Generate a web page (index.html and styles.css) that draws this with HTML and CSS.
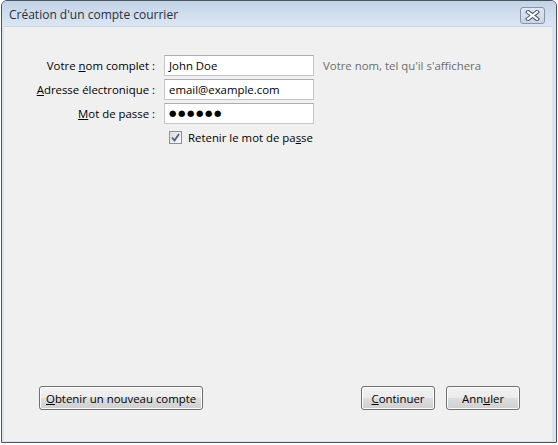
FILE: index.html
```html
<!DOCTYPE html>
<html lang="fr">
<head>
<meta charset="utf-8">
<title>Création d'un compte courrier</title>
<link rel="stylesheet" href="styles.css">
</head>
<body>
<div class="window">
  <div class="titlebar">
    <span class="title">Création d'un compte courrier</span>
    <button class="close" aria-label="Fermer">
      <svg width="15" height="11" viewBox="0 0 15 11">
        <path d="M3 2 L12 9 M12 2 L3 9" stroke="#4e5666" stroke-width="4.2" stroke-linecap="square" fill="none"/>
        <path d="M3 2 L12 9 M12 2 L3 9" stroke="#ffffff" stroke-width="2.2" stroke-linecap="square" fill="none"/>
      </svg>
    </button>
  </div>
  <div class="client">
    <div class="form">
      <label class="lbl">Votre <u>n</u>om complet :</label>
      <div class="field">John Doe</div>
      <span class="hint">Votre nom, tel qu'il s'affichera</span>

      <label class="lbl"><u>A</u>dresse électronique :</label>
      <div class="field">email@example.com</div>
      <span></span>

      <label class="lbl"><u>M</u>ot de passe :</label>
      <div class="field pw">●●●●●●</div>
      <span></span>

      <span></span>
      <div class="check">
        <span class="box">
          <svg width="9" height="9" viewBox="0 0 9 9"><path d="M1 4.5 L3.5 7.5 L8 1" stroke="#4a5f8c" stroke-width="1.8" fill="none"/></svg>
        </span>
        <span>Retenir le mot de pa<u>s</u>se</span>
      </div>
      <span></span>
    </div>
    <div class="buttons">
      <button class="btn wide"><u>O</u>btenir un nouveau compte</button>
      <div class="right">
        <button class="btn"><u>C</u>ontinuer</button>
        <button class="btn">Ann<u>u</u>ler</button>
      </div>
    </div>
  </div>
</div>
</body>
</html>
```
FILE: styles.css
```css
html, body {
  margin: 0;
  padding: 0;
  background: #ffffff;
}
body {
  width: 558px;
  height: 445px;
  overflow: hidden;
  font-family: "Open Sans", "Noto Sans", sans-serif;
  font-size: 11.4px;
  color: #000;
}
.window {
  margin-left: 1px;
  width: 556px;
  height: 443px;
  box-sizing: border-box;
  border: 1px solid #4d5158;
  border-radius: 6px 6px 0 0;
  background: #d9e4f1;
  display: flex;
  flex-direction: column;
}
.titlebar {
  height: 25px;
  flex: none;
  display: flex;
  align-items: center;
  justify-content: space-between;
  padding: 0 11px 0 7px;
  background: linear-gradient(#c2d3e7, #dbe6f3);
  border-radius: 5px 5px 0 0;
}
.title {
  color: #2a2f38;
  font-size: 12px;
  padding-top: 1px;
}
.close {
  width: 25px;
  height: 17px;
  margin-top: 3px;
  padding: 0;
  border: 1px solid #8595ad;
  border-radius: 3px;
  background: linear-gradient(#dfe7f2, #c8d5e6);
  display: flex;
  align-items: center;
  justify-content: center;
}
.client {
  flex: 1;
  margin: 0 4px 1px 2px;
  border-top: 1px solid #c9d4e2;
  background: #f0f0f0;
  display: flex;
  flex-direction: column;
}
.form {
  display: grid;
  grid-template-columns: 151px 150px auto;
  column-gap: 9px;
  row-gap: 3px;
  align-items: center;
  padding-top: 28px;
}
.lbl {
  text-align: right;
  white-space: nowrap;
  color: #000;
}
.field {
  box-sizing: border-box;
  height: 21px;
  border: 1px solid #c5c7cc;
  border-top-color: #abadb3;
  background: #fff;
  padding-left: 4px;
  line-height: 19px;
}
.pw {
  font-size: 8.5px;
  letter-spacing: 1.6px;
  font-family: "DejaVu Sans", sans-serif;
}
.hint {
  color: #6d6d6d;
  white-space: nowrap;
}
.check {
  display: flex;
  align-items: center;
  gap: 6px;
  padding-left: 5px;
  margin-top: 3px;
  white-space: nowrap;
}
.box {
  box-sizing: border-box;
  width: 13px;
  height: 13px;
  border: 1px solid #8f8f8f;
  background: linear-gradient(135deg, #dcdcdc, #fafafa);
  display: flex;
  align-items: center;
  justify-content: center;
}
.buttons {
  margin-top: auto;
  display: flex;
  justify-content: space-between;
  padding: 0 32px 31px 35px;
}
.right {
  display: flex;
  gap: 11px;
}
.btn {
  box-sizing: border-box;
  height: 24px;
  min-width: 74px;
  padding: 0 6px;
  font-family: inherit;
  font-size: 11.4px;
  white-space: nowrap;
  color: #000;
  border: 1px solid #707070;
  border-radius: 3px;
  background: linear-gradient(#f2f2f2 0%, #ebebeb 50%, #dddddd 51%, #cfcfcf 100%);
  box-shadow: inset 0 0 0 1px #fcfcfc;
}
.wide {
  width: 164px;
}
```
